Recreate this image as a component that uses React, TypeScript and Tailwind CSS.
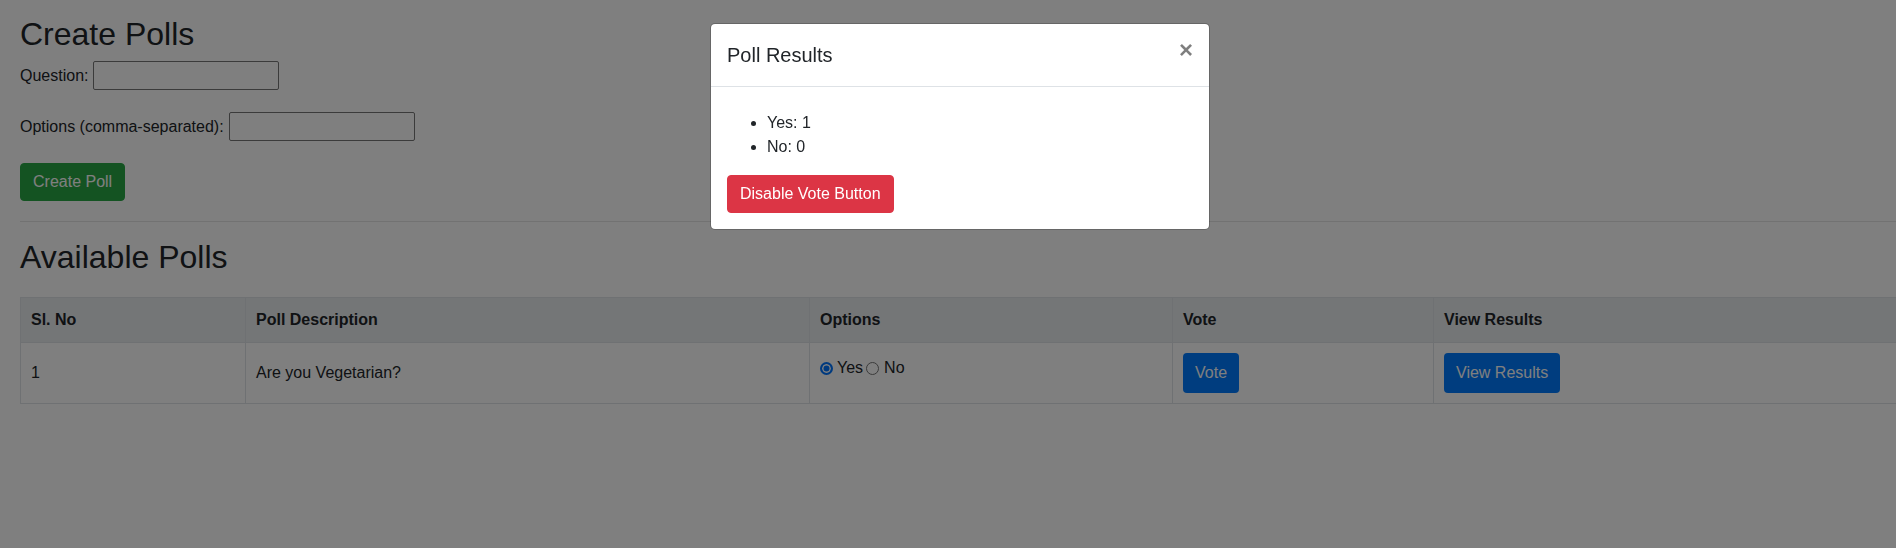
import React from "react";

const cell = "border border-[#dee2e6] px-[10px] py-[10px] leading-6";
const radio =
  "m-0 h-[13px] w-[13px] shrink-0 appearance-none rounded-full border border-[#767676] bg-white checked:border-2 checked:border-[#0075ff] checked:bg-[#0075ff] checked:shadow-[inset_0_0_0_1.5px_white]";

export default function App() {
  return (
    <div className="relative min-h-screen w-full overflow-hidden bg-white text-[16px] text-[#212529] font-['Liberation_Sans',Arial,sans-serif]">
      {/* Page */}
      <div className="pt-[15px] pl-[20px]">
        <h2 className="text-[32px] leading-[38px] font-normal">Create Polls</h2>

        <div className="mt-[8px] flex h-[29px] items-center">
          <label className="leading-6">Question:</label>
          <input type="text" className="ml-[5px] h-[29px] w-[186px] rounded-[2px] border border-[#767676] bg-white px-[2px]" />
        </div>

        <div className="mt-[22px] flex h-[29px] items-center">
          <label className="leading-6">Options (comma-separated):</label>
          <input type="text" className="ml-[5px] h-[29px] w-[186px] rounded-[2px] border border-[#767676] bg-white px-[2px]" />
        </div>

        <button className="mt-[22px] h-[38px] rounded-[4px] border border-[#28a745] bg-[#28a745] px-[12px] leading-6 text-white">
          Create Poll
        </button>

        <hr className="mt-[20px] border-0 border-t border-black/10" />

        <h2 className="mt-[16px] text-[32px] leading-[38px] font-normal">Available Polls</h2>

        <table className="mt-[21px] w-[1900px] table-fixed border-collapse text-left">
          <colgroup>
            <col className="w-[225px]" />
            <col className="w-[564px]" />
            <col className="w-[363px]" />
            <col className="w-[261px]" />
            <col />
          </colgroup>
          <thead>
            <tr className="bg-[#e9ecef]">
              <th className={`${cell} font-bold`}>Sl. No</th>
              <th className={`${cell} font-bold`}>Poll Description</th>
              <th className={`${cell} font-bold`}>Options</th>
              <th className={`${cell} font-bold`}>Vote</th>
              <th className={`${cell} font-bold`}>View Results</th>
            </tr>
          </thead>
          <tbody>
            <tr>
              <td className={`${cell} align-middle`}>1</td>
              <td className={`${cell} align-middle`}>Are you Vegetarian?</td>
              <td className={`${cell} align-top`}>
                <div className="mt-[3px] flex h-6 items-center">
                  <input type="radio" name="opt" defaultChecked className={radio} />
                  <span className="ml-[4px]">Yes</span>
                  <input type="radio" name="opt" className={`${radio} ml-[3px]`} />
                  <span className="ml-[5px]">No</span>
                </div>
              </td>
              <td className={`${cell} align-middle`}>
                <button className="h-[40px] rounded-[4px] bg-[#007bff] px-[12px] leading-6 text-white">Vote</button>
              </td>
              <td className={`${cell} align-middle`}>
                <button className="h-[40px] rounded-[4px] bg-[#007bff] px-[12px] leading-6 text-white">View Results</button>
              </td>
            </tr>
          </tbody>
        </table>
      </div>

      {/* Modal backdrop + dialog */}
      <div className="fixed inset-0 bg-black/50">
        <div className="absolute left-[710px] top-[23px] w-[500px] rounded-[5px] border border-black/20 bg-white bg-clip-padding">
          <div className="flex items-start justify-between border-b border-[#dee2e6] p-4">
            <h5 className="text-[20px] leading-[30px] font-normal">Poll Results</h5>
            <span className="mt-[-2px] text-[24px] font-bold leading-6 text-black opacity-50">×</span>
          </div>
          <div className="p-4">
            <ul className="mt-[8px] mb-4 list-disc pl-[40px] leading-6">
              <li>Yes: 1</li>
              <li>No: 0</li>
            </ul>
            <button className="h-[38px] rounded-[4px] border border-[#dc3545] bg-[#dc3545] px-[12px] leading-6 text-white">
              Disable Vote Button
            </button>
          </div>
        </div>
      </div>
    </div>
  );
}
